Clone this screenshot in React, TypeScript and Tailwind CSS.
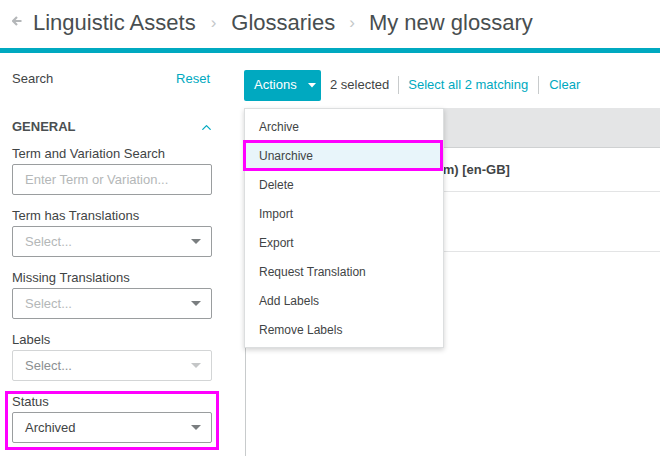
import { ChevronUp } from "lucide-react";

const menuItems = [
  "Archive",
  "Unarchive",
  "Delete",
  "Import",
  "Export",
  "Request Translation",
  "Add Labels",
  "Remove Labels",
];

function Caret({ light }: { light?: boolean }) {
  return (
    <svg width="10" height="6" viewBox="0 0 10 6" className="shrink-0">
      <path d="M0 0 L10 0 L5 5 Z" fill={light ? "#c4c6c7" : "#7a7e80"} />
    </svg>
  );
}

function SelectBox({
  value,
  placeholder,
  disabled,
}: {
  value?: string;
  placeholder?: string;
  disabled?: boolean;
}) {
  return (
    <div
      className={`h-[31px] w-[200px] flex items-center justify-between pl-3 pr-[10px] rounded-[2px] border ${
        disabled ? "border-[#d3d5d6]" : "border-[#9a9d9f]"
      }`}
    >
      <span
        className={`text-[13px] ${
          value ? "text-[#3f4445]" : disabled ? "text-[#8c9092]" : "text-[#b4b7b8]"
        }`}
      >
        {value ?? placeholder}
      </span>
      <Caret light={disabled} />
    </div>
  );
}

function Field({ label, children }: { label: string; children: React.ReactNode }) {
  return (
    <div className="flex flex-col">
      <div className="text-[13px] leading-[16px] text-[#3f4445] mb-[2px]">{label}</div>
      {children}
    </div>
  );
}

export default function App() {
  return (
    <div
      className="w-[660px] h-[456px] bg-white overflow-hidden flex flex-col"
      style={{ fontFamily: '"Liberation Sans", Arial, sans-serif' }}
    >
      {/* Breadcrumb header */}
      <div className="h-[48px] flex items-center pl-[12px] pb-[3px] text-[22px] text-[#484e50] shrink-0">
        <svg width="10" height="10" viewBox="0 0 10 10" className="mr-[11px] -mt-[3px]">
          <path d="M5 1 L1 5 L5 9 M1.5 5 L9.5 5" stroke="#b4b7b9" strokeWidth="2.2" fill="none" />
        </svg>
        <span>Linguistic Assets</span>
        <span className="text-[#c4c7c9] text-[17px] mx-[15px]">›</span>
        <span>Glossaries</span>
        <span className="text-[#c4c7c9] text-[17px] mx-[14px]">›</span>
        <span>My new glossary</span>
      </div>
      <div className="h-[5px] bg-[#00a9c0] shrink-0" />

      <div className="flex flex-1 min-h-0">
        {/* Sidebar */}
        <div className="w-[245px] shrink-0 pl-[12px] pt-[17px] flex flex-col">
          <div className="w-[198px] flex items-center justify-between h-[17px] text-[13px]">
            <span className="text-[#3f4445]">Search</span>
            <span className="text-[#00a9c0]">Reset</span>
          </div>
          <div className="w-[200px] h-px bg-[#cfd1d2] mt-[15px]" />
          <div className="w-[200px] flex items-center justify-between mt-[17px] h-[16px]">
            <span className="text-[13px] font-bold text-[#4a4f51]">GENERAL</span>
            <ChevronUp size={15} strokeWidth={2} className="text-[#00a9c0] mr-[-2px]" />
          </div>
          <div className="flex flex-col gap-[13px] mt-[11px]">
            <Field label="Term and Variation Search">
              <div className="h-[31px] w-[200px] flex items-center px-3 rounded-[2px] border border-[#9a9d9f]">
                <span className="text-[13px] text-[#b4b7b8]">Enter Term or Variation...</span>
              </div>
            </Field>
            <Field label="Term has Translations">
              <SelectBox placeholder="Select..." />
            </Field>
            <Field label="Missing Translations">
              <SelectBox placeholder="Select..." />
            </Field>
            <Field label="Labels">
              <SelectBox placeholder="Select..." disabled />
            </Field>
            <div className="relative">
              <div className="absolute left-[-7px] top-[-3px] w-[214px] h-[59px] border-[3px] border-[#ff00ff]" />
              <Field label="Status">
                <SelectBox value="Archived" />
              </Field>
            </div>
            <div className="w-[200px] h-[20px] border-t border-[#d3d5d6]" />
          </div>
        </div>

        {/* Main */}
        <div className="flex-1 flex flex-col min-w-0 relative">
          <div className="h-[55px] flex items-center pt-[9px] -ml-[1px] text-[13px]">
            <div className="h-[31px] w-[77px] bg-[#00a9c0] rounded-[2px] flex items-center pl-[10px] gap-[11px] text-white">
              <span>Actions</span>
              <svg width="8" height="5" viewBox="0 0 8 5">
                <path d="M0 0 L8 0 L4 4.5 Z" fill="#ffffff" />
              </svg>
            </div>
            <span className="ml-[9px] text-[#3f4445]">2 selected</span>
            <span className="mx-[9px] w-px h-[18px] bg-[#c8cbcc]" />
            <span className="text-[#00a9c0]">Select all 2 matching</span>
            <span className="mx-[10px] w-px h-[18px] bg-[#c8cbcc]" />
            <span className="text-[#00a9c0]">Clear</span>
          </div>

          <div className="flex-1 border-l border-[#c8cbcc] flex flex-col">
            <div className="h-[40px] bg-[#e4e5e6] border-b border-[#cfd1d2]" />
            <div className="h-[44px] border-b border-[#e3e4e5] flex items-center pl-[53px] text-[13px] font-bold text-[#3f4445]">
              English (United Kingdom) [en-GB]
            </div>
            <div className="h-[60px] border-b border-[#e3e4e5]" />
          </div>

          {/* Actions dropdown */}
          <div className="absolute left-[-1px] top-[55px] w-[200px] bg-white border border-[#dcdedf] shadow-[0_2px_5px_rgba(0,0,0,0.18)] py-[3px]">
            {menuItems.map((item) => (
              <div
                key={item}
                className={`relative h-[29px] flex items-center pl-[14px] text-[12px] text-[#3f4445] ${
                  item === "Unarchive" ? "bg-[#e8f5fa]" : ""
                }`}
              >
                {item}
                {item === "Unarchive" && (
                  <div className="absolute left-[-2px] top-[-1px] w-[200px] h-[31px] border-[3px] border-[#ff00ff]" />
                )}
              </div>
            ))}
          </div>
        </div>
      </div>
    </div>
  );
}
